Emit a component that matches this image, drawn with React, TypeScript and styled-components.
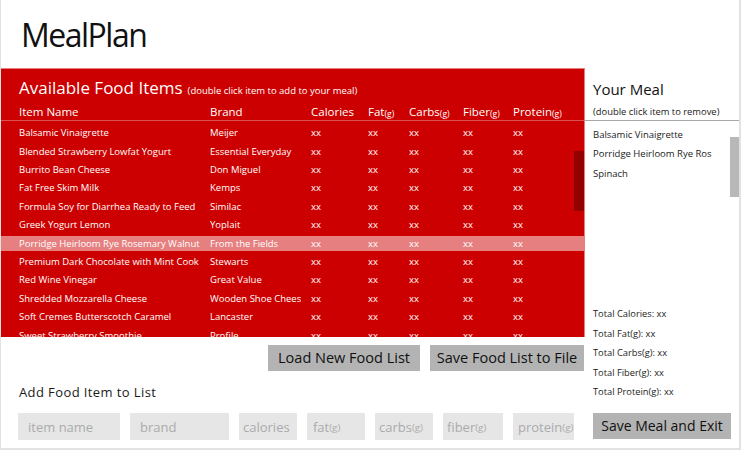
import React from 'react';
import styled, { createGlobalStyle } from 'styled-components';

const FONT = `"Open Sans", "Noto Sans", "Liberation Sans", sans-serif`;

const Global = createGlobalStyle`
  html, body { margin: 0; padding: 0; background: #fff; }
  body { font-family: ${FONT}; }
  * { box-sizing: border-box; }
`;

const Frame = styled.div`
  width: 741px;
  height: 450px;
  border-left: 1px solid #e2e2e2;
  border-right: 2px solid #e2e2e2;
  border-bottom: 2px solid #e2e2e2;
  display: flex;
  flex-direction: column;
  overflow: hidden;
`;

const Header = styled.header`
  height: 68px;
  flex: none;
  padding: 19px 0 0 20px;
`;

const Logo = styled.h1`
  margin: 0;
  font-weight: 400;
  font-size: 32px;
  line-height: 32px;
  letter-spacing: -1.5px;
  color: #111;
`;

const Body = styled.div`
  flex: 1;
  display: grid;
  grid-template-columns: 584px 1fr;
  min-height: 0;
`;

const LeftCol = styled.div`
  display: flex;
  flex-direction: column;
`;

const RedPanel = styled.section`
  height: 269px;
  flex: none;
  background: #cc0000;
  border-top: 1px solid #ec7b7b;
  border-right: 1px solid #ec7b7b;
  color: #fff;
  display: flex;
  flex-direction: column;
`;

const TitleRow = styled.div`
  padding: 9px 0 0 18px;
  line-height: 20px;
  height: 29px;
  display: flex;
  align-items: baseline;
  gap: 5px;
  white-space: nowrap;
`;

const PanelTitle = styled.span`
  font-size: 17px;
`;

const Hint = styled.span`
  font-size: 9.5px;
`;

const cols = `181px 91px 47px 31px 44px 40px 1fr`;

const HeaderRow = styled.div`
  margin-top: 6px;
  height: 16px;
  line-height: 16px;
  font-size: 11.5px;
  display: grid;
  grid-template-columns: ${cols};
  column-gap: 10px;
  padding-left: 18px;
  white-space: nowrap;
`;

const Unit = styled.span`
  font-size: 0.75em;
  vertical-align: -1px;
`;

const RedDivider = styled.div`
  height: 1px;
  flex: none;
  background: rgba(255, 255, 255, 0.32);
`;

const FoodList = styled.div`
  flex: 1;
  position: relative;
  overflow: hidden;
  padding-top: 4.3px;
`;

const FoodRow = styled.div<{ $selected?: boolean }>`
  display: grid;
  grid-template-columns: ${cols};
  column-gap: 10px;
  padding-left: 18px;
  height: 15px;
  line-height: 15px;
  margin-bottom: 3.4px;
  font-size: 9.5px;
  background: ${(p) => (p.$selected ? 'rgba(255,255,255,0.5)' : 'transparent')};
`;

const Cell = styled.span`
  overflow: hidden;
  white-space: nowrap;
`;

const RedThumb = styled.div`
  position: absolute;
  right: 0;
  top: 30px;
  width: 10px;
  height: 60px;
  background: #930000;
`;

const ButtonRow = styled.div`
  margin-top: 8px;
  padding-right: 1px;
  display: flex;
  justify-content: flex-end;
  gap: 10px;
`;

const ActionButton = styled.button<{ $w: number }>`
  width: ${(p) => p.$w}px;
  height: 26px;
  padding: 0;
  border: none;
  background: #b3b3b3;
  color: #111;
  font-family: ${FONT};
  font-size: 14.5px;
  line-height: 26px;
  cursor: pointer;
`;

const AddLabel = styled.div`
  margin-top: 13px;
  padding-left: 18px;
  font-size: 13px;
  letter-spacing: 0.4px;
  line-height: 16px;
  color: #1a1a1a;
`;

const FieldRow = styled.div`
  margin-top: 13.3px;
  padding-left: 17px;
  display: flex;
  gap: 10px;
`;

const Field = styled.div<{ $w: number; $pad: number }>`
  width: ${(p) => p.$w}px;
  height: 27px;
  padding: 1px 0 0 ${(p) => p.$pad}px;
  background: #e6e6e6;
  color: #ababab;
  font-size: 13px;
  display: flex;
  align-items: center;
  white-space: nowrap;
  overflow: hidden;
`;

const MealPanel = styled.aside`
  display: flex;
  flex-direction: column;
  min-height: 0;
`;

const MealTitle = styled.h2`
  margin: 0;
  padding: 10.5px 0 0 8px;
  font-weight: 400;
  font-size: 15px;
  line-height: 20px;
  color: #111;
`;

const MealHint = styled.div`
  margin-top: 6.7px;
  padding-left: 8px;
  font-size: 9.4px;
  line-height: 14px;
  color: #222;
  white-space: nowrap;
`;

const MealDivider = styled.div`
  margin-top: 1px;
  height: 1px;
  background: #a8a8a8;
`;

const MealList = styled.div`
  flex: 1;
  position: relative;
  padding: 3.5px 0 0 8px;
`;

const MealItem = styled.div`
  font-size: 9.5px;
  line-height: 19.4px;
  color: #222;
  white-space: nowrap;
`;

const GrayThumb = styled.div`
  position: absolute;
  right: 0;
  top: 15.5px;
  width: 9px;
  height: 60px;
  background: #b8b8b8;
`;

const Totals = styled.div`
  padding-left: 8px;
`;

const TotalLine = styled.div`
  font-size: 9.3px;
  line-height: 19.5px;
  color: #222;
  white-space: nowrap;
`;

const ExitButton = styled(ActionButton)`
  margin: 11.8px 0 8.7px 8px;
  font-size: 14px;
`;

const foods: [string, string][] = [
  ['Balsamic Vinaigrette', 'Meijer'],
  ['Blended Strawberry Lowfat Yogurt', 'Essential Everyday'],
  ['Burrito Bean Cheese', 'Don Miguel'],
  ['Fat Free Skim Milk', 'Kemps'],
  ['Formula Soy for Diarrhea Ready to Feed', 'Similac'],
  ['Greek Yogurt Lemon', 'Yoplait'],
  ['Porridge Heirloom Rye Rosemary Walnut', 'From the Fields'],
  ['Premium Dark Chocolate with Mint Cook', 'Stewarts'],
  ['Red Wine Vinegar', 'Great Value'],
  ['Shredded Mozzarella Cheese', 'Wooden Shoe Cheese'],
  ['Soft Cremes Butterscotch Caramel', 'Lancaster'],
  ['Sweet Strawberry Smoothie', 'Profile'],
];

const fields: { label: string; unit?: boolean; w: number; pad: number }[] = [
  { label: 'item name', w: 102, pad: 10 },
  { label: 'brand', w: 99, pad: 10 },
  { label: 'calories', w: 58, pad: 4 },
  { label: 'fat', unit: true, w: 58, pad: 6 },
  { label: 'carbs', unit: true, w: 58, pad: 4 },
  { label: 'fiber', unit: true, w: 60, pad: 4 },
  { label: 'protein', unit: true, w: 61, pad: 5 },
];

export default function App() {
  return (
    <>
      <Global />
      <Frame>
        <Header>
          <Logo>MealPlan</Logo>
        </Header>
        <Body>
          <LeftCol>
            <RedPanel>
              <TitleRow>
                <PanelTitle>Available Food Items</PanelTitle>
                <Hint>(double click item to add to your meal)</Hint>
              </TitleRow>
              <HeaderRow>
                <Cell>Item Name</Cell>
                <Cell>Brand</Cell>
                <Cell>Calories</Cell>
                <Cell>
                  Fat<Unit>(g)</Unit>
                </Cell>
                <Cell>
                  Carbs<Unit>(g)</Unit>
                </Cell>
                <Cell>
                  Fiber<Unit>(g)</Unit>
                </Cell>
                <Cell>
                  Protein<Unit>(g)</Unit>
                </Cell>
              </HeaderRow>
              <RedDivider />
              <FoodList>
                {foods.map(([name, brand], i) => (
                  <FoodRow key={name} $selected={i === 6}>
                    <Cell>{name}</Cell>
                    <Cell>{brand}</Cell>
                    <Cell>xx</Cell>
                    <Cell>xx</Cell>
                    <Cell>xx</Cell>
                    <Cell>xx</Cell>
                    <Cell>xx</Cell>
                  </FoodRow>
                ))}
                <RedThumb />
              </FoodList>
            </RedPanel>
            <ButtonRow>
              <ActionButton $w={152}>Load New Food List</ActionButton>
              <ActionButton $w={154}>Save Food List to File</ActionButton>
            </ButtonRow>
            <AddLabel>Add Food Item to List</AddLabel>
            <FieldRow>
              {fields.map((f) => (
                <Field key={f.label} $w={f.w} $pad={f.pad}>
                  {f.label}
                  {f.unit && <Unit>(g)</Unit>}
                </Field>
              ))}
            </FieldRow>
          </LeftCol>
          <MealPanel>
            <MealTitle>Your Meal</MealTitle>
            <MealHint>(double click item to remove)</MealHint>
            <MealDivider />
            <MealList>
              <MealItem>Balsamic Vinaigrette</MealItem>
              <MealItem>Porridge Heirloom Rye Ros</MealItem>
              <MealItem>Spinach</MealItem>
              <GrayThumb />
            </MealList>
            <Totals>
              <TotalLine>Total Calories: xx</TotalLine>
              <TotalLine>Total Fat(g): xx</TotalLine>
              <TotalLine>Total Carbs(g): xx</TotalLine>
              <TotalLine>Total Fiber(g): xx</TotalLine>
              <TotalLine>Total Protein(g): xx</TotalLine>
            </Totals>
            <ExitButton $w={138}>Save Meal and Exit</ExitButton>
          </MealPanel>
        </Body>
      </Frame>
    </>
  );
}
